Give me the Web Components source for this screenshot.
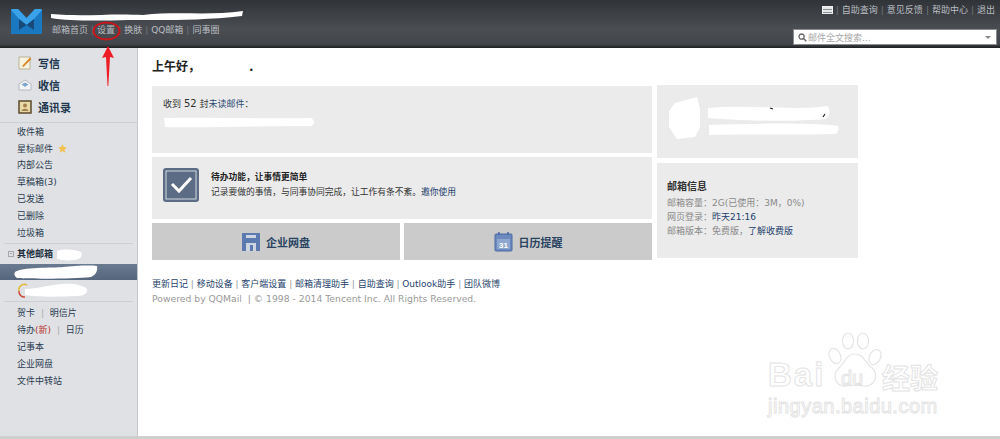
<!DOCTYPE html>
<html>
<head>
<meta charset="utf-8">
<title>QQ邮箱</title>
<style>
html, body { margin: 0; height: 439px; overflow: hidden; background: #fff; }
body { font: 9px "DejaVu Sans", "Noto Sans CJK SC", sans-serif; color: #333; }
</style>
</head>
<body>
<mail-app>
  <mail-header slot="header"></mail-header>
  <mail-sidebar slot="side"></mail-sidebar>
  <mail-home slot="main"></mail-home>
</mail-app>

<script>
const FONT = '"DejaVu Sans", "Noto Sans CJK SC", sans-serif';

// Page shell: header on top, sidebar and content below
class MailApp extends HTMLElement {
  constructor() {
    super();
    this.attachShadow({ mode: "open" }).innerHTML = `
<style>
:host { display: grid; grid-template-rows: 48px 1fr 3px; height: 439px; width: 1000px; position: relative; overflow: hidden; }
.body { display: grid; grid-template-columns: 138px 1fr; min-height: 0; }
.end { background: #cfcfcf; }
.arrow { position: absolute; left: 100px; top: 45px; }
</style>
<slot name="header"></slot>
<div class="body"><slot name="side"></slot><slot name="main"></slot></div>
<div class="end"></div>
<svg class="arrow" width="16" height="42" viewBox="0 0 16 42"><path d="M8 1 L14 13 L10 12 L8.300 41 L7.500 41 L6 12 L2 13Z" fill="#ee1c25"/></svg>`;
  }
}

// Dark top bar with logo, nav links and the search box
class MailHeader extends HTMLElement {
  constructor() {
    super();
    this.attachShadow({ mode: "open" }).innerHTML = `
<style>
:host { display: flex; position: relative; background: linear-gradient(#303337, #4a4d52 60%, #43464a 92%, #1d1f21); font: 9px ${FONT}; color: #b9bdc2; box-sizing: border-box; padding: 0 3px 0 11px; }
.logo { width: 31px; height: 25px; margin-top: 9px; flex: none; }
.mid { margin-left: 10px; padding-top: 24px; }
.nav, .top { display: flex; align-items: center; line-height: 12px; white-space: nowrap; }
.nav i { font-style: normal; color: #70757b; margin: 0 3px; }
.top i { font-style: normal; color: #70757b; margin: 0 3px; }
.top { margin-right: 2px; }
.right { margin-left: auto; display: flex; flex-direction: column; align-items: flex-end; padding-top: 4px; }
.kb { width: 11px; height: 8px; background: repeating-linear-gradient(#e4e6e8 0 2px, #8e9194 2px 3px); border: 1px solid #eee; box-sizing: border-box; }
.search { margin-top: 13px; width: 204px; height: 16px; background: #fff; border: 1px solid #8b8e91; box-sizing: border-box; display: flex; align-items: center; padding: 0 4px; color: #a5a5a5; font-size: 9px; gap: 1px; }
.search span { flex: 1; }
.caret { width: 0; height: 0; border: 3px solid transparent; border-top: 3px solid #888; border-bottom: 0; margin-right: 1px; }
.scribble { position: absolute; left: 48px; top: 10px; }
.ring { position: absolute; left: 92px; top: 20px; }
</style>
<svg class="logo" viewBox="0 0 31 25">
  <path d="M1 0 H7 L15.500 9 L24 0 H30 Q31 0 31 1 V24 Q31 25 30 25 H1 Q0 25 0 24 V1 Q0 0 1 0Z" fill="#1a78c0"/>
  <path d="M1 0 H7 L15.500 9 L24 0 H30 L31 1 L23 10 L15.500 16 L8 10 L0 1Z" fill="#3aa2e8"/>
  <path d="M8 10 L15.500 16 L8 21Z M23 10 L15.500 16 L23 21Z" fill="#174a78"/>
</svg>
<div class="mid">
  <div class="nav"><span>邮箱首页</span><i>|</i><span>设置</span><i>|</i><span>换肤</span><i>|</i><span>QQ邮箱</span><i>|</i><span>同事圈</span></div>
</div>
<div class="right">
  <div class="top"><div class="kb"></div><i>|</i><span>自助查询</span><i>|</i><span>意见反馈</span><i>|</i><span>帮助中心</span><i>|</i><span>退出</span></div>
  <div class="search">
    <svg width="9" height="9" viewBox="0 0 9 9"><circle cx="3.600" cy="3.600" r="2.600" fill="none" stroke="#666" stroke-width="1.300"/><path d="M5.500 5.500 L8.300 8.300" stroke="#666" stroke-width="1.500"/></svg>
    <span>邮件全文搜索...</span><div class="caret"></div>
  </div>
</div>
<svg class="scribble" width="200" height="14" viewBox="0 0 200 14"><path d="M3 4 C40 7 60 3 95 5 C130 1 160 6 195 1 L194 6 C150 11 110 10 80 10 C50 11 20 11 3 8Z" fill="#fff"/></svg>
<svg class="ring" width="30" height="24" viewBox="0 0 30 24"><ellipse cx="14.500" cy="11" rx="13" ry="8.500" fill="none" stroke="#c8171d" stroke-width="2"/></svg>`;
  }
}

// One line in the sidebar
class SideRow extends HTMLElement {
  constructor() {
    super();
    this.attachShadow({ mode: "open" }).innerHTML = `
<style>
:host { display: flex; align-items: center; height: 16.800px; padding-left: 17px; white-space: nowrap; color: #2c3c50; font-size: 9px; gap: 5px; }
</style>
<slot></slot>`;
  }
}

class MailSidebar extends HTMLElement {
  constructor() {
    super();
    this.attachShadow({ mode: "open" }).innerHTML = `
<style>
:host { display: block; position: relative; background: #dfe1e4; border-right: 1px solid #c4c7ca; font: 9px ${FONT}; box-sizing: border-box; overflow: hidden; }
.big { display: flex; align-items: center; gap: 6px; height: 22px; padding-left: 18px; font-size: 11px; font-weight: bold; color: #22384f; }
.big svg { width: 14px; height: 14px; flex: none; }
.tops { padding-top: 4px; padding-bottom: 4px; border-bottom: 1px solid #cdd0d3; }
.list { padding-top: 0; }
hr { border: 0; height: 1px; background: #cdd0d3; margin: 2px 4px 0; }
.group { display: flex; align-items: center; height: 20px; padding-left: 8px; gap: 3px; font-weight: bold; color: #22303f; }
.box { width: 6px; height: 6px; border: 1px solid #a3a7ab; box-sizing: border-box; position: relative; }
.box::after { content: ""; position: absolute; left: 1px; right: 1px; top: 1px; height: 1px; background: #a3a7ab; }
.sel { height: 16px; background: linear-gradient(#6a7b90, #55677e); }
.acct { height: 18px; }
.sep { color: #aaa; margin: 0 3px; }
.new { color: #b5322f; }
.blob { position: absolute; pointer-events: none; }
</style>
<div class="tops">
  <div class="big"><svg viewBox="0 0 14 14"><rect x="1" y="1" width="11" height="12" fill="#f7f3df" stroke="#b8b39a"/><path d="M4 10 L12 1.500 L13.500 3 L5.500 11Z" fill="#d98a2b"/></svg>写信</div>
  <div class="big"><svg viewBox="0 0 14 14"><path d="M1 6 L7 2 L13 6 V12 H1Z" fill="#f3f4f6" stroke="#b5bac0"/><path d="M3.500 6.500 L7 4.500 L10.500 6.500 L7 9Z" fill="#7fa6cf"/></svg>收信</div>
  <div class="big"><svg viewBox="0 0 14 14"><rect x="1" y="1" width="12" height="12" fill="#e9d9a8" stroke="#5b4a2a" stroke-width="1.500"/><circle cx="7" cy="5.500" r="2" fill="#a2824a"/><path d="M3.500 11 C4 8 10 8 10.500 11Z" fill="#a2824a"/></svg>通讯录</div>
</div>
<div class="list">
  <side-row>收件箱</side-row>
  <side-row>星标邮件 <svg width="9" height="9" viewBox="0 0 10 10"><path d="M5 0 L6.400 3.400 L10 3.700 L7.200 6 L8.100 9.600 L5 7.700 L1.900 9.600 L2.800 6 L0 3.700 L3.600 3.400Z" fill="#f2c14e"/></svg></side-row>
  <side-row>内部公告</side-row>
  <side-row>草稿箱(3)</side-row>
  <side-row>已发送</side-row>
  <side-row>已删除</side-row>
  <side-row>垃圾箱</side-row>
</div>
<hr>
<div class="group"><div class="box"></div>其他邮箱</div>
<div class="sel"></div>
<div class="acct"></div>
<hr style="margin-top:3px">
<div class="list" style="padding-top:3px">
  <side-row><span>贺卡<span class="sep"> | </span>明信片</span></side-row>
  <side-row><span>待办<span class="new">(新)</span><span class="sep"> | </span>日历</span></side-row>
  <side-row>记事本</side-row>
  <side-row>企业网盘</side-row>
  <side-row>文件中转站</side-row>
</div>
<svg class="blob" style="left:13px;top:200px" width="86" height="32" viewBox="0 0 86 32">
  <path d="M44 3 C50 1 60 1 68 4 C70 8 68 11 62 12 C54 13 48 12 44 11Z" fill="#fff"/>
  <path d="M2 24 C8 19 40 20 50 19 C60 18 76 17 84 18 C85 22 83 27 78 29 C60 31 20 31 4 30 C1 28 1 26 2 24Z" fill="#fff"/>
</svg>
<svg class="blob" style="left:17px;top:235px" width="72" height="20" viewBox="0 0 72 20">
  <path d="M2 8 A5.500 5.500 0 0 1 10 2" fill="none" stroke="#e2b93b" stroke-width="1.500"/>
  <path d="M2 8 A5.500 5.500 0 0 0 8 14" fill="none" stroke="#cf4a3a" stroke-width="1.500"/>
  <path d="M8 6 C20 6 30 2 45 1 C55 0 66 2 70 6 C71 10 68 13 60 13 C40 14 20 14 8 12Z" fill="#fff"/>
</svg>`;
  }
}

// Gray panel used for every card on the home page
class HomeCard extends HTMLElement {
  constructor() {
    super();
    this.attachShadow({ mode: "open" }).innerHTML = `
<style>
:host { display: block; background: #ebebeb; box-sizing: border-box; position: relative; overflow: hidden; }
</style>
<slot></slot>`;
  }
}

class MailHome extends HTMLElement {
  constructor() {
    super();
    this.attachShadow({ mode: "open" }).innerHTML = `
<style>
:host { display: block; padding: 11px 0 0 14px; font: 9px ${FONT}; color: #333; position: relative; overflow: hidden; }
h1 { margin: 0; font-size: 12px; line-height: 16px; font-weight: bold; color: #222; height: 26px; }
.grid { display: grid; grid-template-columns: 500px 201px; column-gap: 5px; width: 706px; }
.left { display: flex; flex-direction: column; gap: 4px; margin-top: 1px; }
.right { display: flex; flex-direction: column; gap: 5px; }
.unread { height: 67px; padding: 11px 11px; }
.unread b { font-weight: normal; font-size: 10px; }
.unread span { color: #2c4a72; }
.todo { height: 62px; display: flex; align-items: flex-start; padding: 11px 0 0 11px; gap: 12px; font-size: 8.750px; }
.todo svg { flex: none; }
.todo strong { display: block; color: #222; line-height: 15px; margin-top: 2px; }
a { color: #1d3f6b; text-decoration: none; }
.btns { display: grid; grid-template-columns: 248px 248px; column-gap: 4px; }
.btn { height: 37px; background: #cbcbcb; display: flex; align-items: center; justify-content: center; gap: 6px; font-size: 11px; font-weight: bold; color: #2a4462; }
.who { height: 73px; position: relative; }
.info { height: 95px; padding: 16px 10px; color: #8a8a8a; line-height: 14px; }
.info h3 { margin: 0 0 2px; font-size: 10px; line-height: 15px; color: #333; font-weight: bold; }
.foot { margin-top: 18px; }
.links { display: flex; align-items: center; line-height: 12px; color: #1d3f6b; white-space: nowrap; }
.links i { font-style: normal; color: #999; margin: 0 2.800px; }
.copy { color: #999; line-height: 14px; margin-top: 2px; white-space: nowrap; font-size: 9.250px; }
.blob { position: absolute; }
.mark { position: absolute; left: 630px; top: 284px; width: 180px; height: 90px; }
.mark span { position: absolute; color: #fff; -webkit-text-stroke: 1px #e4e4e4; white-space: nowrap; line-height: 1; }
</style>
<h1>上午好，<span style="margin-left:49px;color:#222">.</span></h1>
<div class="grid">
  <div class="left">
    <home-card class="unread">
      <div>收到 <b>52</b> 封<span>未读邮件</span>：</div>
      <svg class="blob" style="left:11px;top:29px" width="154" height="14" viewBox="0 0 154 14"><path d="M1 3 C40 2 100 4 148 3 C153 6 152 10 147 11 C100 11 40 13 2 12Z" fill="#fff"/></svg>
    </home-card>
    <home-card class="todo">
      <svg width="36" height="34" viewBox="0 0 36 34"><rect width="36" height="34" rx="3" fill="#5b6c84"/><rect x="3" y="3" width="30" height="28" fill="none" stroke="#d5dae2"/><path d="M9 16 L16 23 L28 10" fill="none" stroke="#fff" stroke-width="3"/></svg>
      <div><strong>待办功能，让事情更简单</strong>记录要做的事情，与同事协同完成，让工作有条不紊。<a>邀你使用</a></div>
    </home-card>
    <div class="btns">
      <div class="btn"><svg width="18" height="18" viewBox="0 0 18 18"><rect width="18" height="18" fill="#5c79b0"/><rect x="4" y="2" width="10" height="3" fill="#cdd4e2"/><rect x="4" y="10" width="10" height="8" fill="#cdd4e2"/><rect x="8" y="12" width="3" height="6" fill="#5c79b0"/></svg>企业网盘</div>
      <div class="btn"><svg width="19" height="20" viewBox="0 0 19 20"><rect x="1" y="2" width="17" height="17" rx="1" fill="#6d8abf" stroke="#4a6aa3"/><rect x="3" y="7" width="13" height="10" fill="#8fa7d0"/><path d="M5 0 V3 M14 0 V3" stroke="#4a6aa3" stroke-width="1.500"/><text x="9.500" y="15.500" font-size="8" text-anchor="middle" fill="#fff" font-family="Liberation Sans">31</text></svg>日历提醒</div>
    </div>
  </div>
  <div class="right">
    <home-card class="who">
      <svg class="blob" style="left:10px;top:12px" width="185" height="45" viewBox="0 0 185 45">
        <path d="M8 6 L30 0 L33 12 L33 30 L28 40 L10 42 L2 30 L2 14Z" fill="#fff"/>
        <path d="M41 11 C80 7 130 14 160 9 C164 12 163 20 158 22 C130 25 80 24 41 21Z" fill="#fff"/>
        <path d="M42 28 C90 26 150 26 171 29 C172 32 171 36 168 37 C130 38 90 37 42 38Z" fill="#fff"/>
        <path d="M103 11 l3 1 M156 20 l2 -3" stroke="#222" stroke-width="1.200"/>
      </svg>
    </home-card>
    <home-card class="info">
      <h3>邮箱信息</h3>
      <div>邮箱容量：2G(已使用：3M，0%)</div>
      <div>网页登录：<a>昨天21:16</a></div>
      <div>邮箱版本：免费版，<a>了解收费版</a></div>
    </home-card>
  </div>
</div>
<div class="foot">
  <div class="links"><span>更新日记</span><i>|</i><span>移动设备</span><i>|</i><span>客户端设置</span><i>|</i><span>邮箱清理助手</span><i>|</i><span>自助查询</span><i>|</i><span>Outlook助手</span><i>|</i><span>团队微博</span></div>
  <div class="copy">Powered by QQMail &nbsp;| © 1998 - 2014 Tencent Inc. All Rights Reserved.</div>
</div>
<div class="mark">
  <svg style="position:absolute;left:60px;top:0" width="56" height="58" viewBox="0 0 56 58" fill="#fff" stroke="#e4e4e4" stroke-width="1.200">
    <ellipse cx="7" cy="24" rx="5.500" ry="8" transform="rotate(-25 7 24)"/><ellipse cx="20" cy="9" rx="5.500" ry="8"/><ellipse cx="35" cy="9" rx="5.500" ry="8"/><ellipse cx="47" cy="25" rx="5.500" ry="8" transform="rotate(25 47 25)"/>
    <path d="M27 22 C36 22 37 31 44 36 C52 43 46 55 36 54 C30 53 24 53 18 54 C8 55 3 43 11 36 C17 31 18 22 27 22Z"/>
  </svg>
  <span style="left:0;top:24px;font:bold 33px 'Liberation Sans';letter-spacing:2px">Bai</span>
  <span style="left:73px;top:35px;font:20px 'Liberation Sans'">du</span>
  <span style="left:114px;top:25px;font:bold 28px 'Noto Sans CJK SC'">经验</span>
  <span style="left:0;top:63px;font:20px 'Liberation Sans';letter-spacing:.5px">jingyan.baidu.com</span>
</div>`;
  }
}

customElements.define("mail-app", MailApp);
customElements.define("mail-header", MailHeader);
customElements.define("side-row", SideRow);
customElements.define("mail-sidebar", MailSidebar);
customElements.define("home-card", HomeCard);
customElements.define("mail-home", MailHome);
</script>
</body>
</html>
